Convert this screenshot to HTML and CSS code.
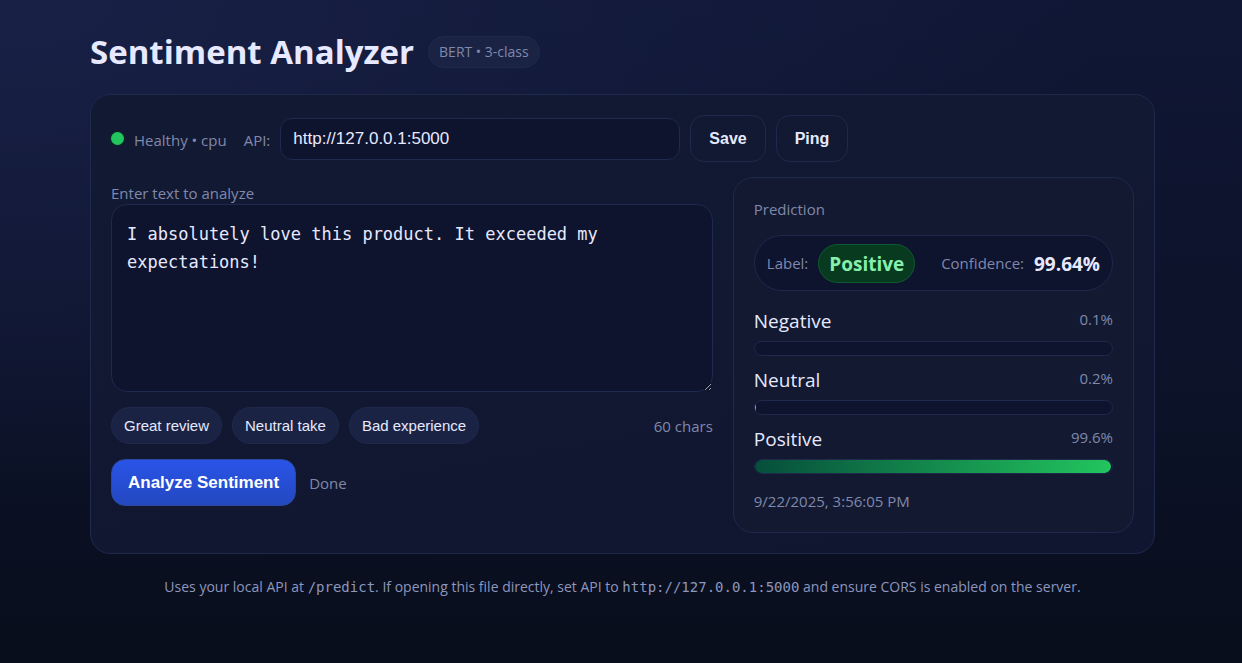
FILE: index.html
```
<!DOCTYPE html>
<html lang="en">
<head>
<meta charset="utf-8">
<meta name="viewport" content="width=device-width, initial-scale=1">
<title>Sentiment Analyzer</title>
<link rel="stylesheet" href="styles.css">
</head>
<body>
<div class="page">
  <header class="header">
    <h1 class="title">Sentiment Analyzer</h1>
    <span class="tag">BERT • 3-class</span>
  </header>
  <main class="card">
    <div class="toolbar">
      <span class="dot"></span>
      <span class="muted health">Healthy • cpu</span>
      <label class="muted api-label" for="api">API:</label>
      <input class="api" id="api" type="text" value="http://127.0.0.1:5000">
      <button class="btn" type="button">Save</button>
      <button class="btn" type="button">Ping</button>
    </div>
    <div class="grid">
      <section class="entry">
        <label class="muted" for="text">Enter text to analyze</label>
        <textarea class="text" id="text">I absolutely love this product. It exceeded my expectations!</textarea>
        <div class="samples">
          <button class="chip" type="button">Great review</button>
          <button class="chip" type="button">Neutral take</button>
          <button class="chip" type="button">Bad experience</button>
          <span class="muted count">60 chars</span>
        </div>
        <div class="actions">
          <button class="btn primary" type="button">Analyze Sentiment</button>
          <span class="muted">Done</span>
        </div>
      </section>
      <section class="panel">
        <div class="muted">Prediction</div>
        <div class="result">
          <span class="muted">Label:</span>
          <span class="badge">Positive</span>
          <span class="muted conf-label">Confidence:</span>
          <span class="conf">99.64%</span>
        </div>
        <div class="score">
          <div class="score-head"><span class="name">Negative</span><span class="pct">0.1%</span></div>
          <div class="bar"><div class="fill negative" style="width:0.1%"></div></div>
        </div>
        <div class="score">
          <div class="score-head"><span class="name">Neutral</span><span class="pct">0.2%</span></div>
          <div class="bar"><div class="fill neutral" style="width:0.2%"></div></div>
        </div>
        <div class="score">
          <div class="score-head"><span class="name">Positive</span><span class="pct">99.6%</span></div>
          <div class="bar"><div class="fill positive" style="width:99.6%"></div></div>
        </div>
        <div class="muted time">9/22/2025, 3:56:05 PM</div>
      </section>
    </div>
  </main>
  <footer class="footer">Uses your local API at <code>/predict</code>. If opening this file directly, set API to <code>http://127.0.0.1:5000</code> and ensure CORS is enabled on the server.</footer>
</div>
</body>
</html>
```
FILE: styles.css
```
:root {
  --text: #e6e9ff;
  --muted: #8088ab;
  --line: #1e294b;
  --field: #0e132e;
  --chip: #1a2344;
}
* { box-sizing: border-box; }
body {
  margin: 0;
  min-height: 100vh;
  color: var(--text);
  font-family: "Open Sans", "Noto Sans", sans-serif;
  font-size: 15px;
  line-height: 22px;
  background:
    radial-gradient(1100px 500px at 0 0, #182046, transparent),
    linear-gradient(180deg, #101735, #0c1228 60%, #080e1b);
}
.page { padding: 28px 87px 32px 90px; }
.header { display: flex; align-items: center; gap: 14px; margin-bottom: 18px; }
.title { margin: 0; font-size: 33px; line-height: 48px; font-weight: 700; }
.tag {
  padding: 4px 10px;
  border: 1px solid var(--line);
  border-radius: 16px;
  background: var(--chip);
  color: var(--muted);
  font-size: 14px;
}
.card {
  padding: 20px;
  border: 1px solid var(--line);
  border-radius: 20px;
  background: linear-gradient(170deg, #121a33, #111630);
}
.muted { color: var(--muted); }
.toolbar { display: flex; align-items: center; gap: 10px; margin-bottom: 15px; }
.dot {
  width: 13px;
  height: 13px;
  border-radius: 50%;
  background: #22c55e;
  box-shadow: 0 0 0 1px #0c2a26;
}
.health { margin-top: 2px; }
.api-label { margin: 2px 0 0 7px; }
.api {
  flex: 0 1 400px;
  min-width: 0;
  height: 42px;
  padding: 0 12px;
  border: 1px solid var(--line);
  border-radius: 12px;
  background: var(--field);
  color: var(--text);
  font: 17px "Liberation Sans", Arial, sans-serif;
}
.btn {
  height: 47px;
  padding: 0 18px;
  border: 1px solid var(--line);
  border-radius: 14px;
  background: transparent;
  color: var(--text);
  font: 700 17px "Liberation Sans", Arial, sans-serif;
}
.toolbar .btn { font-size: 16px; }
.grid { display: grid; grid-template-columns: 3fr 2fr; gap: 20px; align-items: start; }
.entry { padding-top: 5px; }
.entry > label { display: block; }
.text {
  display: block;
  width: 100%;
  height: 188px;
  padding: 15px;
  border: 1px solid var(--line);
  border-radius: 16px;
  background: var(--field);
  color: var(--text);
  font: 17px/28px "DejaVu Sans Mono", monospace;
  resize: vertical;
}
.samples { display: flex; align-items: center; gap: 10px; margin-top: 15px; }
.chip {
  height: 37px;
  padding: 0 12px;
  border: 1px solid var(--line);
  border-radius: 19px;
  background: var(--chip);
  color: var(--text);
  font: 15px "Liberation Sans", Arial, sans-serif;
}
.count { margin-left: auto; }
.actions { display: flex; align-items: center; gap: 13px; margin-top: 15px; }
.primary {
  padding: 0 16px;
  border-color: #2b489f;
  background: linear-gradient(180deg, #2954e8, #2448c0);
  color: #fff;
}
.panel { padding: 20px; border: 1px solid var(--line); border-radius: 20px; background: #121931; }
.result {
  display: flex;
  align-items: center;
  height: 56px;
  margin: 15px 0 18px;
  padding: 0 12px;
  border: 1px solid var(--line);
  border-radius: 28px;
  background: var(--field);
}
.badge {
  margin-left: 10px;
  padding: 5px 10px 3px;
  border: 1px solid #0f5a30;
  border-radius: 20px;
  background: #083a20;
  color: #86efac;
  font-size: 19px;
  line-height: 29px;
  font-weight: 700;
}
.conf-label { margin-left: auto; }
.conf { margin-left: 10px; padding-top: 2px; font-size: 19px; font-weight: 700; }
.score { margin-bottom: 12px; }
.score-head { display: flex; justify-content: space-between; margin-bottom: 7px; }
.name { font-size: 19px; line-height: 25px; }
.pct { color: var(--muted); line-height: 20px; }
.bar {
  height: 15px;
  overflow: hidden;
  border: 1px solid var(--line);
  border-radius: 8px;
  background: var(--field);
}
.fill { height: 100%; }
.negative { background: linear-gradient(90deg, #7f1d1d, #ef4444); }
.neutral { background: linear-gradient(90deg, #64748b, #cbd5e1); }
.positive { background: linear-gradient(90deg, #064e3b, #22c55e); border-radius: 8px; }
.time { margin-top: 16px; }
.footer { margin-top: 22px; text-align: center; color: #8d96bd; font-size: 14px; }
.footer code { font: 14px "DejaVu Sans Mono", monospace; }
```
